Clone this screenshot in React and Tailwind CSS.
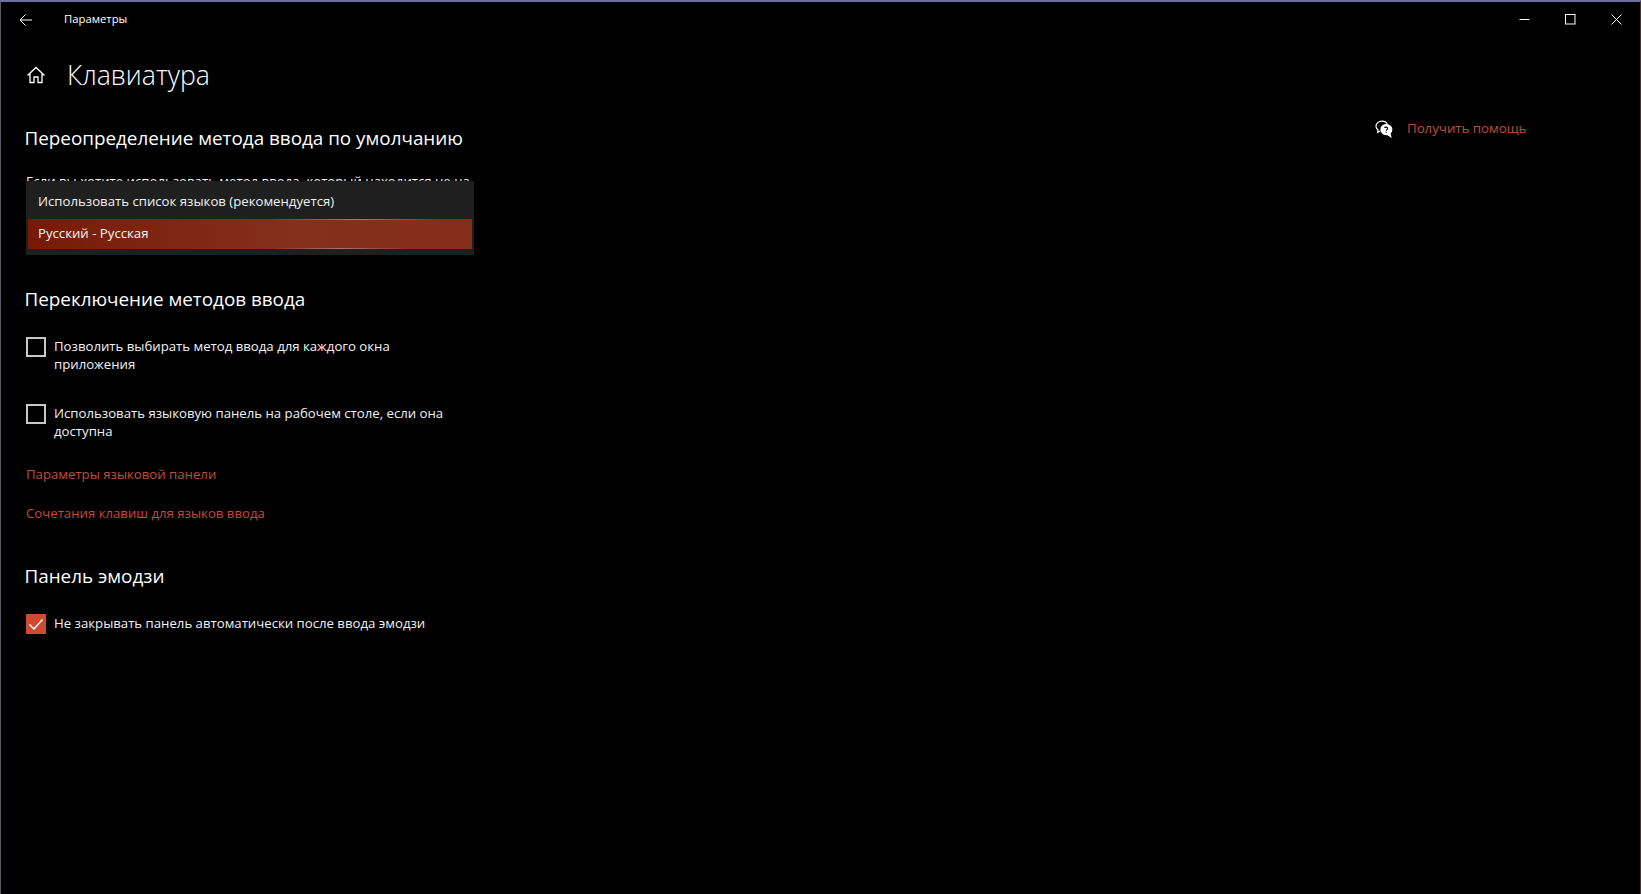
import React from "react";

const font = { fontFamily: '"Open Sans", sans-serif' };

const Checkbox = ({ checked, children }) => (
  <div className="flex items-start gap-[8px] text-[13.2px] leading-[18px] text-[#f2f2f2]">
    {checked ? (
      <span className="flex h-[20px] w-[20px] shrink-0 items-center justify-center bg-[#cf4b30]">
        <svg width="20" height="20" viewBox="0 0 20 20" fill="none" stroke="#fff" strokeWidth="1.4">
          <path d="M3.5 10.5 L8 15 L16.5 5.5" />
        </svg>
      </span>
    ) : (
      <span className="h-[20px] w-[20px] shrink-0 border-2 border-[#c8c8c8]" />
    )}
    <span>{children}</span>
  </div>
);

const SectionTitle = ({ children }) => (
  <h2 className="-ml-[1.5px] text-[18.85px] leading-[28px] text-white">{children}</h2>
);

export default function App() {
  return (
    <div
      className="relative flex h-screen flex-col overflow-hidden border-t-2 border-r border-l border-t-[#6d6fa3] border-r-[#50302a] border-l-[#5f5668] bg-black text-white"
      style={font}
    >
      {/* title bar */}
      <div className="flex h-[35px] shrink-0 items-center">
        <svg className="ml-[18px]" width="14" height="14" viewBox="0 0 14 14" fill="none" stroke="#fff" strokeWidth="1">
          <path d="M13 7 H1 M6.5 1.5 L1 7 L6.5 12.5" />
        </svg>
        <span className="ml-[31px] text-[11.3px]">Параметры</span>
        <div className="ml-auto mr-[1px] flex items-center">
          <div className="flex h-[35px] w-[46px] items-center justify-center">
            <svg width="11" height="11" viewBox="0 0 11 11" fill="none" stroke="#fff" strokeWidth="1">
              <path d="M0.5 5.5 H10.5" />
            </svg>
          </div>
          <div className="flex h-[35px] w-[46px] items-center justify-center">
            <svg width="11" height="11" viewBox="0 0 11 11" fill="none" stroke="#fff" strokeWidth="1">
              <rect x="0.5" y="0.5" width="9.5" height="9.5" />
            </svg>
          </div>
          <div className="flex h-[35px] w-[46px] items-center justify-center">
            <svg width="11" height="11" viewBox="0 0 11 11" fill="none" stroke="#fff" strokeWidth="1">
              <path d="M0.5 0.5 L10.5 10.5 M10.5 0.5 L0.5 10.5" />
            </svg>
          </div>
        </div>
      </div>

      {/* page header */}
      <div className="mt-[18px] flex h-[40px] items-center">
        <svg className="ml-[25px]" width="20" height="20" viewBox="0 0 20 20" fill="none" stroke="#fff" strokeWidth="1.3">
          <path d="M1.5 10.5 L10 2.5 L18.5 10.5 M4 8.5 V17.5 H8 V12 H12 V17.5 H16 V8.5" />
        </svg>
        <h1 className="ml-[21px] mt-[2px] text-[26.6px] font-light">Клавиатура</h1>
      </div>

      <div className="flex flex-1">
        {/* left column */}
        <div className="ml-[25px] w-[450px]">
          <div className="mt-[29px]">
            <SectionTitle>Переопределение метода ввода по умолчанию</SectionTitle>
          </div>

          <div className="relative mt-[20px] h-[85px]">
            <p className="whitespace-nowrap text-[13.2px] leading-[18px] text-[#f2f2f2]">
              Если вы хотите использовать метод ввода, который находится не на
            </p>
            <div className="absolute left-0 top-[9px] w-[448px] bg-[#1f1f1f]">
              <div className="flex h-[38px] items-center pl-[12px] pt-[4px] text-[13.2px] text-[#f2f2f2]">
                Использовать список языков (рекомендуется)
              </div>
              <div className="relative mx-[2px] flex h-[30px] items-center bg-gradient-to-r from-[#771a05] via-[#84301c] via-60% to-[#842e1b] pl-[10px] text-[13.2px] text-[#f5f5f5]">
                <span className="absolute left-[240px] right-[30px] top-0 h-px bg-gradient-to-r from-transparent via-[#a87868] to-transparent" />
                <span className="absolute bottom-0 left-[240px] right-[60px] h-px bg-gradient-to-r from-transparent via-[#a07868] to-transparent" />
                Русский - Русская
              </div>
              <div className="h-[6px]" />
            </div>
          </div>

          <div className="mt-[28px]">
            <SectionTitle>Переключение методов ввода</SectionTitle>
          </div>

          <div className="mt-[24px]">
            <Checkbox>
              Позволить выбирать метод ввода для каждого окна
              <br />
              приложения
            </Checkbox>
          </div>
          <div className="mt-[31px]">
            <Checkbox>
              Использовать языковую панель на рабочем столе, если она
              <br />
              доступна
            </Checkbox>
          </div>

          <div className="mt-[24px] text-[13.2px] leading-[20px] text-[#c24d36]">Параметры языковой панели</div>
          <div className="mt-[19px] text-[13.2px] leading-[20px] text-[#c24d36]">Сочетания клавиш для языков ввода</div>

          <div className="mt-[39px]">
            <SectionTitle>Панель эмодзи</SectionTitle>
          </div>
          <div className="mt-[24px]">
            <Checkbox checked>Не закрывать панель автоматически после ввода эмодзи</Checkbox>
          </div>
        </div>

        {/* help column */}
        <div className="ml-[899px] mt-[24px] flex h-[20px] items-center gap-[14px]">
          <svg width="18" height="18" viewBox="0 0 18 18" fill="none" stroke="#fff" strokeWidth="1.2">
            <path d="M7 1.2 C3.5 1.2 1 3.4 1 6.2 C1 7.8 1.8 9 3 9.8 L2.6 12.4 L5.4 10.8" />
            <path d="M7 1.2 C9.6 1.2 11.6 2.4 12.4 4.2" />
            <path d="M11 4.5 C14.2 4.5 16.8 6.6 16.8 9.6 C16.8 11.4 16 12.6 15 13.4 L15.8 16.8 L12.6 14.6 C9 15 6 12.8 6 9.6 C6 6.8 8.2 4.5 11 4.5 Z" fill="#fff" />
            <path d="M9.6 8 C9.8 6.8 12.6 6.8 12.6 8.4 C12.6 9.6 11.2 9.6 11.2 10.8 M11.2 11.8 V12.8" stroke="#000" strokeWidth="1.1" />
          </svg>
          <span className="text-[13.25px] text-[#c24d36]">Получить помощь</span>
        </div>
      </div>
    </div>
  );
}
